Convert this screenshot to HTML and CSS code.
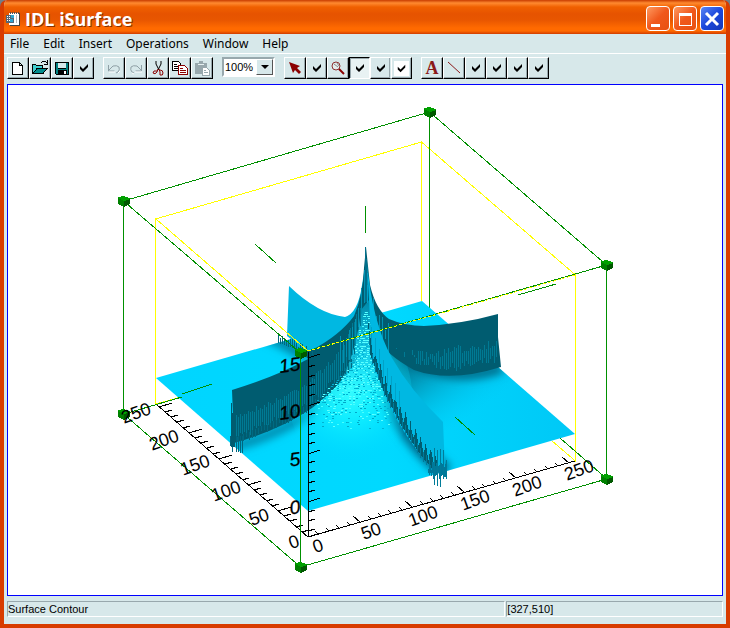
FILE: index.html
```html
<!DOCTYPE html>
<html lang="en">
<head>
<meta charset="utf-8">
<title>IDL iSurface</title>
<link rel="stylesheet" href="styles.css">
</head>
<body>
<svg class="symbols" aria-hidden="true">
  <symbol id="check" viewBox="0 0 16 16"><path d="M4 6v3l3 3 5-5V4L7 9z"/></symbol>
</svg>
<div class="window">
  <header class="titlebar">
    <svg class="app-icon" viewBox="0 0 16 16" shape-rendering="crispEdges"><path d="M4 2h10v12H4z" fill="#fff"/><path d="M14 2h1v13H5v-1h9z" fill="#444"/><path d="M5 1h1v2H5zM7 1h1v2H7zM9 1h1v2H9zM11 1h1v2h-1zM13 1h1v2h-1z" fill="#555"/><path d="M1 4h8v8H1z" fill="#567"/><path d="M2 5h1v1H2zM4 5h1v1H4zM2 7h1v1H2zM4 7h1v1H4zM2 9h1v1H2zM4 9h1v1H4z" fill="#fff"/><path d="M6 4h3v3H6zM5 8h3v3H5z" fill="#2ca5d0"/><path d="M11 4h1v8h-1z" fill="#bbb"/></svg>
    <h1 class="title">IDL iSurface</h1>
    <button class="caption" aria-label="Minimize"><svg viewBox="0 0 22 22"><path d="M4 16h9v3H4z" fill="#fff"/></svg></button>
    <button class="caption" aria-label="Maximize"><svg viewBox="0 0 22 22" shape-rendering="crispEdges"><path d="M5.500 6.500h12v11H5.500z" fill="none" stroke="#fff"/><path d="M5 5h13v3H5z" fill="#fff"/></svg></button>
    <button class="caption close" aria-label="Close"><svg viewBox="0 0 22 22"><path d="M5 5l12 12M17 5L5 17" stroke="#fff" stroke-width="3"/></svg></button>
  </header>
  <nav class="menubar">
    <button>File</button><button>Edit</button><button>Insert</button><button>Operations</button><button>Window</button><button>Help</button>
  </nav>
  <div class="toolbar">
    <div class="group">
      <button class="tool" aria-label="New"><svg viewBox="0 0 16 16" shape-rendering="crispEdges"><path d="M2.500 2.500h7l3 3v9h-10zM9.500 2.500v3h3" fill="#fff" stroke="#000"/></svg></button>
      <button class="tool" aria-label="Open"><svg viewBox="0 0 16 16" shape-rendering="crispEdges"><path d="M.5 13.500v-9h3l1 1h6v3h4l-4 5z" fill="#40d0d0" stroke="#000"/><path d="M1 13.500l4-5h10l-4 5z" fill="#008c8c" stroke="#000"/><path d="M9 3l2-2h2l2 2M15 0v4h-3" fill="none" stroke="#000"/></svg></button>
      <button class="tool" aria-label="Save"><svg viewBox="0 0 16 16" shape-rendering="crispEdges"><path d="M1 2h14v13H2l-1-1z" fill="#000"/><path d="M2 3h2v6h8V3h2v11H2z" fill="#008080"/><path d="M4 3h8v5H4z" fill="#d6e8ea"/><path d="M4 10h9v4H4z" fill="#000"/><path d="M10 11h2v3h-2z" fill="#fff"/></svg></button>
      <button class="tool small" aria-label="Save options"><svg><use href="#check"/></svg></button>
    </div>
    <div class="group">
      <button class="tool" aria-label="Undo" disabled><svg viewBox="0 0 16 16"><path d="M2.500 5v6h6M3 10l4-4q4-1 6 1 1 3-1 5l-2 1" fill="none" stroke="#8fa0a6"/><path d="M3 12h6M12 13l2-2" stroke="#fff"/></svg></button>
      <button class="tool" aria-label="Redo" disabled><svg viewBox="0 0 16 16"><path d="M13.500 5v6h-6M13 10L9 6Q5 5 3 7q-1 3 1 5l2 1" fill="none" stroke="#8fa0a6"/><path d="M7 12h7M4 13l2 1" stroke="#fff"/></svg></button>
      <button class="tool" aria-label="Cut"><svg viewBox="0 0 16 16"><path d="M6 1v3l3 6M11 1v3l-3 6" fill="none" stroke="#000"/><path d="M8 9l-1 3q-2 3-4 1 0-3 4-2M9 9l1 3v3q3 1 3-2t-3-3" fill="none" stroke="#8b0000"/></svg></button>
      <button class="tool" aria-label="Copy"><svg viewBox="0 0 16 16" shape-rendering="crispEdges"><path d="M.5 1.500h6l2 2v7h-8z" fill="#fff" stroke="#000"/><path d="M2 4.500h3M2 6.500h4M2 8.500h4" stroke="#000"/><path d="M6.500 5.500h6l3 3v6h-9z" fill="#fff" stroke="#8b0000"/><path d="M8 8.500h3M8 10.500h6M8 12.500h6" stroke="#8b0000"/></svg></button>
      <button class="tool" aria-label="Paste" disabled><svg viewBox="0 0 16 16" shape-rendering="crispEdges"><path d="M1 3h4V1h4v2h4v5H8v6H1z" fill="#98a8ad"/><path d="M4 4h6v1H4z" fill="#e7f1f2"/><path d="M8.500 7.500h4l3 3v5h-7z" fill="#fff" stroke="#98a8ad"/><path d="M10 10.500h2M10 12.500h4" stroke="#98a8ad"/></svg></button>
    </div>
    <div class="zoom-box"><select aria-label="Zoom"><option>100%</option></select><span class="arrow" aria-hidden="true"></span></div>
    <div class="group">
      <button class="tool" aria-label="Select"><svg viewBox="0 0 16 16"><path d="M2 2l11 4-3 2 4 4-2 2-4-4-2 3z" fill="#8b0000"/></svg></button>
      <button class="tool small" aria-label="Rotate"><svg><use href="#check"/></svg></button>
      <button class="tool" aria-label="Magnify"><svg viewBox="0 0 16 16"><circle cx="6" cy="6" r="4" fill="#e4eeee" stroke="#8b3030"/><path d="M4 4l4 3M7 3l2 3" stroke="#8b8b8b"/><path d="M9 9l5 5" stroke="#8b0000" stroke-width="2"/></svg></button>
      <button class="tool small pressed" aria-label="Pan"><svg><use href="#check"/></svg></button>
      <button class="tool small flat" aria-label="Range"><svg><use href="#check"/></svg></button>
      <button class="tool small" aria-label="Crop"><svg class="lit"><use href="#check"/></svg></button>
    </div>
    <div class="group">
      <button class="tool letter" aria-label="Text">A</button>
      <button class="tool" aria-label="Line"><svg viewBox="0 0 16 16"><path d="M2 2l12 11" stroke="#8b1a1a"/></svg></button>
      <button class="tool small" aria-label="Rectangle"><svg><use href="#check"/></svg></button>
      <button class="tool small" aria-label="Oval"><svg><use href="#check"/></svg></button>
      <button class="tool small" aria-label="Polygon"><svg><use href="#check"/></svg></button>
      <button class="tool small" aria-label="Freehand"><svg><use href="#check"/></svg></button>
    </div>
  </div>
  <main class="canvas">
    <svg class="plot" viewBox="8 85 714 510" role="img" aria-label="Surface plot">
      <defs>
        <linearGradient id="sheet" x1="0" x2="1"><stop offset="0" stop-color="#00d5ff"/><stop offset=".55" stop-color="#00d9ff"/><stop offset="1" stop-color="#00c8f6"/></linearGradient>
        <radialGradient id="glow" gradientUnits="userSpaceOnUse" cx="350" cy="390" r="72"><stop offset="0" stop-color="#38ffff"/><stop offset=".45" stop-color="#10efff" stop-opacity=".8"/><stop offset="1" stop-color="#00dcff" stop-opacity="0"/></radialGradient>
        <linearGradient id="cone" gradientUnits="userSpaceOnUse" x1="0" y1="300" x2="0" y2="400"><stop offset="0" stop-color="#0088a8"/><stop offset=".5" stop-color="#18c8e6"/><stop offset="1" stop-color="#30f4ff" stop-opacity="0"/></linearGradient>
        <linearGradient id="dune" gradientUnits="userSpaceOnUse" x1="405" y1="365" x2="450" y2="430"><stop offset="0" stop-color="#007894"/><stop offset=".35" stop-color="#00a8cc"/><stop offset="1" stop-color="#00c8f4" stop-opacity="0"/></linearGradient>
        <filter id="soft" filterUnits="userSpaceOnUse" x="140" y="280" width="460" height="250"><feGaussianBlur stdDeviation="4"/></filter>
        <clipPath id="base"><path d="M156 378L422 301 575 434 308 511z"/></clipPath>
      </defs>
      <g class="yellow"><path d="M155.500 404V219L421.500 142V301M421.500 142L575.500 275V461L552 441M156 404l25-7"/></g>
      <path class="green" d="M429.500 112V308"/>
      <path d="M156 378L422 301 575 434 308 511z" fill="url(#sheet)"/>
      <g clip-path="url(#base)">
        <path d="M378 330L400 352 450 372 502 362 550 410 500 440 445 462 410 400z" fill="url(#dune)"/>
        <g fill="none" filter="url(#soft)">
          <path d="M236 446Q300 428 338 388L360 350" stroke="#0086a8" stroke-width="9"/>
          <path d="M372 350Q392 430 446 472" stroke="#00698a" stroke-width="16"/>
          <path d="M262 334Q290 345 312 362" stroke="#0080a0" stroke-width="10"/>
          <path d="M392 350Q445 387 502 368" stroke="#006c88" stroke-width="10"/>
        </g>
      </g>
      <ellipse cx="350" cy="395" rx="62" ry="76" fill="url(#glow)"/>
      <path class="fin" d="M289 286Q318 314 345 317 358 313 362 285L366 260V350L310 354 287 336z"/>
      <path class="dark" d="M366 247L370 285Q376 310 389 319 405 326 424 326 462 324 498 314V337L501 367Q450 383 414 370 385 354 374 335L352 366Q340 386 312 408 280 430 234 443L232 390Q275 377 308 359L300 350 312 350Q340 335 354 316 363 295 364 268z"/>
      <path d="M361 310L369 300 378 355 390 398 372 430 335 430 330 397Q355 366 361 310z" fill="url(#cone)"/>
      <g id="strands"></g>
      <path class="fin" d="M367 262Q372 322 392 358 410 390 443 422L445 470 436 472Q390 425 372 358z"/>
      <g id="teeth"></g>
      <path class="green" d="M255 244l21 19M518 295l38-11M365.500 206v27M455 417l20 18M182 394l30-10M560 438l47 41"/>
      <g id="axes" class="axes"></g>
      <path class="green" d="M123.500 201L429.500 112 606.500 265 300.500 353zM123.500 201V414L300.500 567V353M606.500 265V479L300.500 567M124 414l58-17"/>
      <path class="yellow dash" d="M575 275L308 351"/>
      <path class="yellow" d="M308 351L156 219"/>
      <g id="cubes" shape-rendering="crispEdges"></g>
      <g class="labels flat-labels" id="flat-labels"></g>
      <g class="labels height-labels" id="height-labels"></g>
    </svg>
  </main>
  <footer class="status"><span class="cell">Surface Contour</span><span class="cell">[327,510]</span></footer>
</div>
<script src="plot.js"></script>
</body>
</html>
```
FILE: styles.css
```css
* { box-sizing: border-box; }
body { margin: 0; background: #6f7f8b; }
button { font: inherit; color: inherit; padding: 0; border: 0; background: none; }
.symbols { position: absolute; width: 0; height: 0; }
.window {
  display: flex; flex-direction: column; min-height: 100vh;
  border: solid #d83c00; border-width: 0 4px 4px;
  border-radius: 7px 7px 0 0; overflow: hidden;
  background: #d7e8ea; color: #000;
}
.titlebar {
  display: flex; align-items: center; gap: 3px; height: 34px; padding: 3px 2px 0 1px;
  background: linear-gradient(#c83c00 0, #ff8a30 3px, #f06000 7px, #e65300 14px, #e85600 20px, #ff6a00 28px, #ff6a00 31px, #d03c00 34px);
}
.app-icon { width: 16px; height: 16px; }
.title { flex: 1; margin: 0 0 0 1px; font: bold 18px/22px "Open Sans", "Noto Sans", sans-serif; color: #fff; text-shadow: 1px 1px #8a3000; }
.caption {
  width: 24px; height: 25px; border: 1px solid #fff; border-radius: 4px;
  background: linear-gradient(135deg, #ff9a60, #f0581c 50%, #e85010);
}
.caption svg { display: block; width: 22px; height: 22px; }
.close { background: linear-gradient(135deg, #5a86f4, #1c48dc 50%, #1438b8); }
.menubar {
  display: flex; gap: 14px; height: 20px; padding: 0 6px; border-bottom: 1px solid #fff;
  font: 12px/19px "Noto Sans", sans-serif;
}
.toolbar { display: flex; gap: 9px; height: 30px; padding: 3px 4px 5px 3px; }
.group { display: flex; }
.tool {
  display: flex; align-items: center; justify-content: center; width: 22px; height: 22px;
  border: 1px solid; border-color: #fff #000 #000 #fff; box-shadow: inset -1px -1px #98a8ad;
}
.tool svg { width: 16px; height: 16px; }
.small { width: 21px; }
.pressed { border-color: #000 #fff #fff #000; box-shadow: inset 1px 1px #98a8ad; background: #e8f2f3; }
.flat { border-color: #fff #d7e8ea #000 #fff; }
.tool .lit { width: 15px; height: 15px; background: #fff; }
.letter { font: bold 18px/20px "Liberation Serif", serif; color: #8b1a1a; }
.zoom-box { position: relative; width: 53px; height: 20px; }
.zoom-box select {
  appearance: none; width: 100%; height: 20px; padding: 0 0 0 1px; border: 2px solid;
  border-color: #98a8ad #fff #fff #98a8ad; border-radius: 0; background: #fff; color: #000;
  font: 11px/16px "Liberation Sans", sans-serif;
}
.arrow {
  position: absolute; top: 2px; right: 2px; width: 17px; height: 16px; pointer-events: none;
  background: #d7e8ea; border: 1px solid; border-color: #fff #555 #555 #fff;
}
.arrow::after { content: ""; position: absolute; left: 4px; top: 5px; border: solid transparent; border-width: 4px 4px 0; border-top-color: #000; }
.canvas { flex: 1; display: flex; margin: 0 3px; border: 1px solid #00f; background: #fff; }
.plot { display: block; width: 100%; height: auto; }
.status { display: grid; grid-template-columns: 23fr 10fr; gap: 1px; padding: 5px 3px 7px; font: 11px/14px "Liberation Sans", sans-serif; }
.cell { border: 1px solid; border-color: #98a8ad #fff #fff #98a8ad; white-space: nowrap; }
.yellow { fill: none; stroke: #ff0; shape-rendering: crispEdges; }
.dash { stroke-dasharray: 3 2; }
.green { fill: none; stroke: #009000; shape-rendering: crispEdges; }
.fin { fill: #00b8e2; }
.dark { fill: #005c70; }
.axes { fill: none; stroke: #000; shape-rendering: crispEdges; }
.labels { font-family: "Liberation Sans", sans-serif; text-anchor: middle; fill: #000; }
.flat-labels { font-size: 18px; }
.height-labels { font-size: 19px; font-style: italic; text-anchor: end; stroke: #000; stroke-width: 0.3px; }
.strand { fill: none; shape-rendering: crispEdges; }
```
FILE: plot.js
```js
const NS = 'http://www.w3.org/2000/svg';
const byId = id => document.getElementById(id);

function add(parent, tag, attrs, text) {
  const el = document.createElementNS(NS, tag);
  for (const key in attrs) el.setAttribute(key, attrs[key]);
  if (text !== undefined) el.textContent = text;
  byId(parent).appendChild(el);
}

let seed = 7;
function random() {
  seed = (seed * 16807) % 2147483647;
  return seed / 2147483647;
}

/* Height of a polyline at a given x. */
function at(points, x) {
  for (let i = 1; i < points.length; i++) {
    const [x0, y0] = points[i - 1], [x1, y1] = points[i];
    if (x <= x1) return y0 + (y1 - y0) * (x - x0) / (x1 - x0);
  }
  return points[points.length - 1][1];
}

function strands(parent, color, step, x0, x1, span) {
  let d = '';
  for (let x = x0; x <= x1; x += step) {
    const [a, b] = span(x);
    if (b > a) d += `M${x + 0.5} ${Math.round(a)}V${Math.round(b)}`;
  }
  add(parent, 'path', { class: 'strand', stroke: color, d });
}

/* Facets on the left and right walls. */
const leftMid = [[232, 415], [280, 396], [310, 378], [340, 350], [362, 300]];
const leftFoot = [[232, 443], [276, 424], [312, 406], [333, 387], [350, 366], [362, 325]];
strands('strands', '#007a94', 2, 234, 360, x => {
  const a = at(leftMid, x), b = at(leftFoot, x);
  return [a + random() * 6, b - random() * 9];
});
strands('strands', '#006a82', 3, 234, 356, x => [at(leftFoot, x) - 4, at(leftFoot, x) + random() * 5]);
const rightMid = [[374, 315], [390, 347], [425, 351], [499, 338]];
const rightFoot = [[374, 333], [397, 356], [417, 368], [450, 375], [473, 372], [501, 366]];
strands('strands', '#007a94', 2, 376, 497, x => {
  const a = at(rightMid, x), b = at(rightFoot, x);
  return [a + random() * 9, b - 3 - random() * 9];
});

/* Facets between the walls near the summit. */
const ridge = [[320, 347], [345, 327], [356, 310], [363, 270], [366, 250], [370, 285], [380, 312], [398, 323]];
strands('strands', '#0091b2', 3, 340, 390, x => [at(ridge, x) + 4 + random() * 12, at(ridge, x) + 20 + random() * 22]);

/* Woven highlight on the front slope. */
for (const color of ['#00a9c8', '#45ffff', '#00b4d4', '#60ffff']) {
  let d = '';
  for (let y = 312; y < 430; y += 2) {
    const left = y < 366 ? 364 - (y - 312) * 0.26 : Math.max(316, 350 - (y - 366));
    const right = 367 + (y - 312) * 0.2;
    for (let x = left; x < right; x += 4)
      if (random() < (432 - y) / 150) d += `M${Math.round(x + random() * 3)} ${y}.5h2`;
  }
  add('strands', 'path', { class: 'strand', stroke: color, d });
}

/* Ragged edges where the walls meet the sheet. */
const frontLeft = [[366, 300], [370, 352], [383, 388], [400, 421], [420, 452], [437, 472], [446, 474]];
strands('teeth', '#005c70', 1, 368, 436, x => {
  const tooth = [12, 8, 4, 1, 5][x % 5];
  return [at(frontLeft, x) - tooth - random() * 5, at(frontLeft, x) + 3];
});
strands('teeth', '#00799a', 3, 369, 436, x => [at(frontLeft, x) - 4, at(frontLeft, x) + 6]);
strands('teeth', '#00a2c8', 4, 367, 400, x => [at(frontLeft, x) - 28, at(frontLeft, x) - 10]);
strands('teeth', '#00789a', 1, 428, 446, () => [462 + random() * 8, 472 + random() * 7]);
strands('teeth', '#007c98', 3, 434, 446, () => [446 + random() * 14, 475 + random() * 13]);
strands('teeth', '#00667e', 2, 230, 243, () => [436, 445 + random() * 10]);
strands('teeth', '#00667e', 2, 278, 312, x => [333 + (x - 278) * 0.4 + random() * 8, 343 + (x - 278) * 0.35]);
strands('teeth', '#005c70', 1, 231, 234, () => [402 + random() * 12, 447]);
strands('teeth', '#006f8a', 1, 365, 366, x => [247 + (x - 365) * 12, 302]);

/* Axes and tick marks: 10 per minor step, 50 per labelled step. */
let d = 'M575 461L308 537L156 404M308.500 352V537';
for (let i = 0; i <= 25; i++) {
  const major = i % 5 === 0;
  const x = 308 + i * 10.42, y = 537 - i * 2.97;
  d += `M${Math.round(x)} ${Math.round(y)}${major ? 'l-7 -6' : 'l-3 -3'}`;
  const u = 308 - i * 5.96, v = 537 - i * 5.21;
  d += `M${Math.round(u)} ${Math.round(v)}${major ? 'l13 -4' : 'l7 -2'}`;
}
for (let i = -3; i <= 15; i++) {
  d += `M308 ${Math.round(502 - i * 9.63)}${i % 5 === 0 ? 'l12 -4' : 'l7 -2'}`;
}
add('axes', 'path', { d });

for (const [x, y] of [[124, 201], [430, 112], [607, 265], [301, 353], [124, 414], [301, 567], [607, 479]]) {
  add('cubes', 'path', { fill: '#00a000', d: `M${x - 6} ${y - 4}l5 -1 7 2v6l-6 3 -6 -3z` });
  add('cubes', 'path', { fill: '#005800', d: `M${x} ${y}l6 -2v5l-6 3z` });
  add('cubes', 'path', { fill: '#008000', d: `M${x - 6} ${y - 3}l6 3v6l-6 -3z` });
}

const flat = [
  [318, 546, 0], [371, 531, 50], [423, 516, 100], [475, 500, 150], [527, 486, 200], [579, 470, 250],
  [294, 542, 0], [259, 517, 50], [226, 491, 100], [195, 465, 150], [164, 440, 200], [136, 413, 250]
];
for (const [x, y, value] of flat) {
  add('flat-labels', 'text', { transform: `translate(${x} ${y}) rotate(-20)`, y: 6 }, value);
}
for (const [y, value] of [[370, 15], [417, 10], [465, 5], [513, 0]]) {
  add('height-labels', 'text', { transform: `translate(301 ${y}) rotate(-8)` }, value);
}
```
